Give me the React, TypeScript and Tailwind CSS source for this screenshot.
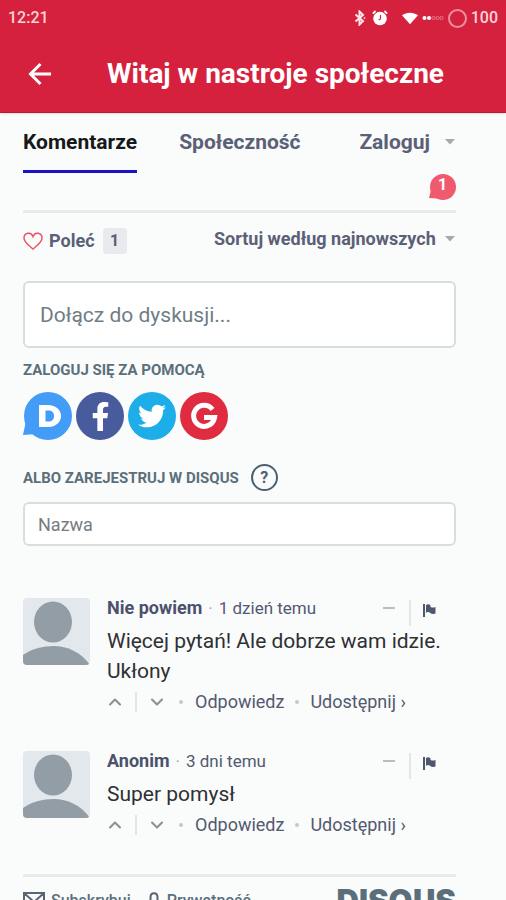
import React, { useState } from 'react';
import { FaFacebookF, FaTwitter } from 'react-icons/fa';
import { ChevronDown, ChevronUp } from 'lucide-react';

interface Comment {
    id: number;
    author: string;
    time: string;
    text: string;
}

const comments: Comment[] = [
    { id: 1, author: 'Nie powiem', time: '1 dzień temu', text: 'Więcej pytań! Ale dobrze wam idzie. Ukłony' },
    { id: 2, author: 'Anonim', time: '3 dni temu', text: 'Super pomysł' },
];

const Caret: React.FC = () => (
    <svg viewBox="0 0 12 6" className="w-3 h-1.5 shrink-0 fill-[#a5a8ad]" aria-hidden="true">
        <path d="M1 0h10L6 5.500z" />
    </svg>
);

const StatusBar: React.FC = () => (
    <div className="flex items-center justify-between h-9 px-2 text-base font-medium text-[#fbd3da]">
        <span>12:21</span>
        <div className="flex items-center">
            <svg viewBox="0 0 12 16" className="w-3 h-4 mr-1.5 fill-none stroke-[#fde6ea] stroke-2" aria-hidden="true">
                <path d="M1.5 4.5 9 11 5.5 14.5V1.5L9 5l-7.500 6.500" />
                <path d="M10.500 7.200v1.600" strokeWidth="1.500" />
            </svg>
            <svg viewBox="0 0 16 16" className="w-4 h-4 mr-3.5" aria-hidden="true">
                <circle cx="8" cy="8.500" r="6.800" fill="#fff" />
                <path d="M.8 3.600 3.600 1M15.200 3.600 12.400 1" stroke="#fff" strokeWidth="1.800" />
                <path d="M8.500 5v4L6.500 10" fill="none" stroke="#d6213e" strokeWidth="1.100" />
            </svg>
            <svg viewBox="0 0 18 14" className="w-4 h-3.5 mr-1" aria-hidden="true">
                <path d="M0 4C5 0 13 0 18 4L9 14z" fill="#fff" />
            </svg>
            <svg viewBox="0 0 22 6" className="w-[22px] h-1.5 mr-1" aria-hidden="true">
                <circle cx="2.500" cy="3" r="2" fill="#fff" />
                <circle cx="7" cy="3" r="2" fill="#fff" />
                <g fill="none" stroke="#e98a99" strokeWidth=".8">
                    <circle cx="11.500" cy="3" r="1.600" />
                    <circle cx="15.500" cy="3" r="1.600" />
                    <circle cx="19.500" cy="3" r="1.600" />
                </g>
            </svg>
            <span className="w-[19px] h-[19px] mr-1 border-2 border-[#ec8f9d] rounded-full" />
            <span>100</span>
        </div>
    </div>
);

const Avatar: React.FC = () => (
    <svg viewBox="0 0 67 67" className="w-[67px] h-[67px] shrink-0 rounded-sm bg-[#e3e8ec]" aria-hidden="true">
        <g fill="#929da6">
            <ellipse cx="30" cy="24" rx="19" ry="20.500" />
            <path d="M0 57C8 51 20 48 31 48c13 0 27 6 36 19H0z" />
        </g>
    </svg>
);

const CommentItem: React.FC<{ comment: Comment }> = ({ comment }) => (
    <li className="flex gap-[17px]">
        <Avatar />
        <div className="flex-1 min-w-0">
            <div className="flex items-start justify-between h-7 pr-5">
                <p className="text-[17px] leading-5 text-[#525970]">
                    <a href="#profile" className="font-bold text-lg leading-5 text-[#4a526c]">{comment.author}</a>
                    <span className="mx-1.5 text-[#a5a8ad]">·</span>
                    <span>{comment.time}</span>
                </p>
                <div className="flex">
                    <button aria-label="Zwiń" className="w-7 h-5 pl-0.5 pr-3.5">
                        <span className="block h-0.5 bg-[#b9bcc1]" />
                    </button>
                    <span className="w-0.5 h-[26px] mt-0.5 mr-3 bg-[#e3e6e9]" />
                    <button aria-label="Zgłoś" className="h-6">
                        <svg viewBox="0 0 13 15" className="w-[13px] h-[15px] fill-[#4f576d]" aria-hidden="true">
                            <path d="M0 1h2v13H0zM3 2c2-1 3-1 4.500.5V4c2 1 3 .6 5 0v6.500c-2 .8-4 .6-5.500-.8-1.500-1-2.500-.8-4 0z" />
                        </svg>
                    </button>
                </div>
            </div>
            <p className="text-[21px] leading-[30px] text-[#2e3033]">{comment.text}</p>
            <div className="flex items-center h-8 text-lg text-[#525970]">
                <button aria-label="Głosuj za">
                    <ChevronUp className="w-5 h-5 -ml-0.5 text-[#8b8f96]" strokeWidth={2.5} />
                </button>
                <span className="w-0.5 h-5 mx-2.5 bg-[#e3e6e9]" />
                <button aria-label="Głosuj przeciw">
                    <ChevronDown className="w-5 h-5 text-[#8b8f96]" strokeWidth={2.5} />
                </button>
                <span className="w-1 h-1 mx-3 rounded-full bg-[#c4c7cb]" />
                <button>Odpowiedz</button>
                <span className="w-1 h-1 mx-[11px] rounded-full bg-[#c4c7cb]" />
                <button>Udostępnij ›</button>
            </div>
        </div>
    </li>
);

const App: React.FC = () => {
    const [message, setMessage] = useState('');
    const [name, setName] = useState('');

    return (
        <div className="flex flex-col h-screen bg-[#fafbfb] font-[Roboto,sans-serif]">
            {/* Header */}
            <header className="relative shrink-0 bg-[#d6213e] border-b border-[#c21730] shadow">
                <StatusBar />
                <div className="flex items-center h-19 pl-7 pr-6 text-white">
                    <button aria-label="Wstecz">
                        <svg viewBox="0 0 24 24" className="w-6 h-6 fill-none stroke-white stroke-[3]" aria-hidden="true">
                            <path d="M23 12H3M12.500 2 2.500 12l10 10" />
                        </svg>
                    </button>
                    <h1 className="ml-[55px] text-[28px] font-bold whitespace-nowrap">Witaj w nastroje społeczne</h1>
                </div>
            </header>

            <main className="flex-1 min-h-0 pl-[23px] pr-[50px] overflow-y-auto [scrollbar-width:none]">
                {/* Tabs */}
                <nav className="flex items-start gap-[42px] text-[21px] font-bold text-[#5a6076]">
                    <a href="#comments" className="h-15 pt-[15px] leading-7 text-[#17181a] border-b-3 border-[#1c12c4]">Komentarze</a>
                    <a href="#community" className="pt-[15px] leading-7">Społeczność</a>
                    <button className="flex items-center gap-3.5 ml-auto pt-[15px] leading-7">
                        Zaloguj <Caret />
                    </button>
                </nav>
                <div className="flex justify-end h-10 border-b-3 border-[#e8ebed]">
                    <button aria-label="Powiadomienia: 1" className="relative w-[27px] h-7">
                        <svg viewBox="0 0 27 28" className="w-[27px] h-7 fill-[#f05a6e]" aria-hidden="true">
                            <circle cx="14" cy="14" r="13" />
                            <path d="M2 17 0 25l9 .5z" />
                        </svg>
                        <span className="absolute inset-0 text-base leading-6 font-bold text-center text-white">1</span>
                    </button>
                </div>

                {/* Recommend and sort */}
                <div className="flex items-start justify-between h-14 pt-3 text-lg font-bold text-[#5a6076]">
                    <button className="flex items-center h-8">
                        <svg viewBox="0 0 20 18" className="w-5 h-[18px] mr-1.5 fill-none stroke-[#ee5268] stroke-[1.5]" aria-hidden="true">
                            <path d="M10 17C6 13.500 1 10.500 1 6c0-5 7-7 9-1.500C12 -1 19 1 19 6c0 4.500-5 7.500-9 11z" />
                        </svg>
                        Poleć
                        <span className="w-6 h-[26px] ml-2 text-base leading-[26px] text-center bg-[#e8eaed] rounded-sm">1</span>
                    </button>
                    <label className="flex items-center gap-2">
                        <select aria-label="Sortowanie" className="appearance-none outline-none">
                            <option>Sortuj według najnowszych</option>
                        </select>
                        <Caret />
                    </label>
                </div>

                {/* Comment form */}
                <form onSubmit={(e) => e.preventDefault()}>
                    <input
                        type="text"
                        aria-label="Komentarz"
                        value={message}
                        onChange={(e) => setMessage(e.target.value)}
                        className="block w-full h-[67px] mt-3 px-[15px] text-[21px] bg-white border-2 border-[#d8ddde] rounded-md placeholder:text-[#6f7d87]"
                        placeholder="Dołącz do dyskusji..."
                    />
                    <p className="mt-3 text-[15px] leading-5 font-bold text-[#5b6f7b]">ZALOGUJ SIĘ ZA POMOCĄ</p>
                    <div className="flex gap-1 mt-3 text-white">
                        <button type="button" aria-label="Disqus" className="w-[49px] h-12">
                            <svg viewBox="0 0 49 48" className="w-[49px] h-12" aria-hidden="true">
                                <circle cx="25" cy="24" r="24" fill="#429cf8" />
                                <path d="M3 29 0 43l14-1z" fill="#429cf8" />
                                <path fillRule="evenodd" d="M16 13h9c8 0 13 5 13 11s-5 11-13 11h-9zm6.500 5.500v11H25c4 0 6-2 6-5.500s-2-5.500-6-5.500z" fill="#fff" />
                            </svg>
                        </button>
                        <button type="button" aria-label="Facebook" className="flex items-center justify-center w-12 h-12 bg-[#475b9d] rounded-full">
                            <FaFacebookF className="w-[29px] h-[29px]" />
                        </button>
                        <button type="button" aria-label="Twitter" className="flex items-center justify-center w-12 h-12 bg-[#1daeea] rounded-full">
                            <FaTwitter className="w-7 h-7" />
                        </button>
                        <button type="button" aria-label="Google" className="w-12 h-12 bg-[#e02c40] rounded-full">
                            <svg viewBox="0 0 48 48" className="w-12 h-12 fill-none stroke-white stroke-[5]" aria-hidden="true">
                                <path d="M32.500 17.500A10.500 10.500 0 1 0 34.500 25.500H24" />
                            </svg>
                        </button>
                    </div>

                    <div className="flex items-center gap-3 mt-6">
                        <label htmlFor="name" className="text-[15px] leading-5 font-bold text-[#5b6f7b]">ALBO ZAREJESTRUJ W DISQUS</label>
                        <button type="button" aria-label="Pomoc" className="w-[27px] h-[27px] text-base leading-5 font-bold text-[#4b6272] border-2 border-[#4b6272] rounded-full">?</button>
                    </div>
                    <input
                        id="name"
                        type="text"
                        value={name}
                        onChange={(e) => setName(e.target.value)}
                        className="block w-full h-11 mt-[11px] px-[13px] text-lg bg-white border-2 border-[#d8ddde] rounded-md placeholder:text-[#787b80]"
                        placeholder="Nazwa"
                    />
                </form>

                {/* Comments */}
                <ul className="mt-[52px] space-y-[33px]">
                    {comments.map((comment) => (
                        <CommentItem key={comment.id} comment={comment} />
                    ))}
                </ul>

                {/* Footer */}
                <footer className="flex items-start gap-4 mt-[33px] pt-2.5 pb-3 text-base font-medium text-[#5b6f7b] border-t-3 border-[#e8ebed]">
                    <a href="#subscribe" className="flex items-center gap-1.5 h-7">
                        <svg viewBox="0 0 22 18" className="w-[22px] h-[18px] fill-none stroke-[#5b6473] stroke-2" aria-hidden="true">
                            <path d="M1 1h20v16H1zl10 9L21 1M1 17l7-8M21 17l-7-8" />
                        </svg>
                        Subskrybuj
                    </a>
                    <a href="#privacy" className="flex items-center gap-1.5 h-7">
                        <svg viewBox="0 0 14 18" className="w-3.5 h-[18px] fill-none stroke-[#5b6473] stroke-2" aria-hidden="true">
                            <path d="M3.500 9V5.500C3.500-.2 10.500-.2 10.500 5.500V9M1 9h12v8H1z" />
                        </svg>
                        Prywatność
                    </a>
                    <a href="#disqus" className="ml-auto font-[Inter,sans-serif] text-[31px] leading-7 font-black text-[#5b6f7b]">DISQUS</a>
                </footer>
            </main>
        </div>
    );
};

export default App;
